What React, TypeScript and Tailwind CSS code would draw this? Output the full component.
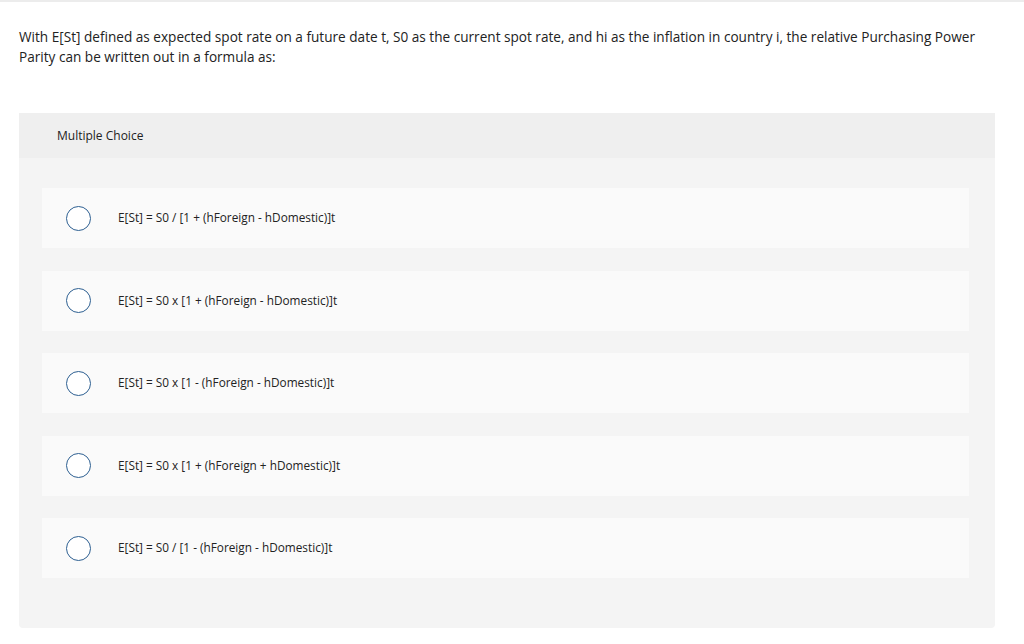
import React from 'react';

const options = [
  'E[St] = S0 / [1 + (hForeign - hDomestic)]t',
  'E[St] = S0 x [1 + (hForeign - hDomestic)]t',
  'E[St] = S0 x [1 - (hForeign - hDomestic)]t',
  'E[St] = S0 x [1 + (hForeign + hDomestic)]t',
  'E[St] = S0 / [1 - (hForeign - hDomestic)]t',
];

export default function App() {
  return (
    <div className="w-[1024px] h-[644px] bg-white border-t-2 border-[#ececec] overflow-hidden" style={{ fontFamily: '"Open Sans", sans-serif' }}>
      <p className="px-[19px] pt-[25px] text-[13.6px] leading-[20px] text-[#222]">
        With E[St] defined as expected spot rate on a future date t, S0 as the current spot rate, and hi as the inflation in country i, the relative Purchasing Power Parity can be written out in a formula as:
      </p>
      <div className="mt-[46px] ml-[19px] w-[976px] bg-[#f4f4f4] rounded-b-sm pb-[50px]">
        <div className="h-[45px] bg-[#efefef] flex items-center pl-[38px] text-[12px] text-[#222]">Multiple Choice</div>
        <div className="flex flex-col gap-[22.5px] pt-[30px] pl-[23px] pr-[26px]">
          {options.map((o) => (
            <div key={o} className="h-[60px] bg-[#fafafa] flex items-center">
              <div className="ml-[24px] w-[25px] h-[25px] rounded-full border-[1.5px] border-[#2d5f91] bg-white" />
              <span className="ml-[27px] text-[11.8px] text-[#222]">{o}</span>
            </div>
          ))}
        </div>
      </div>
    </div>
  );
}
